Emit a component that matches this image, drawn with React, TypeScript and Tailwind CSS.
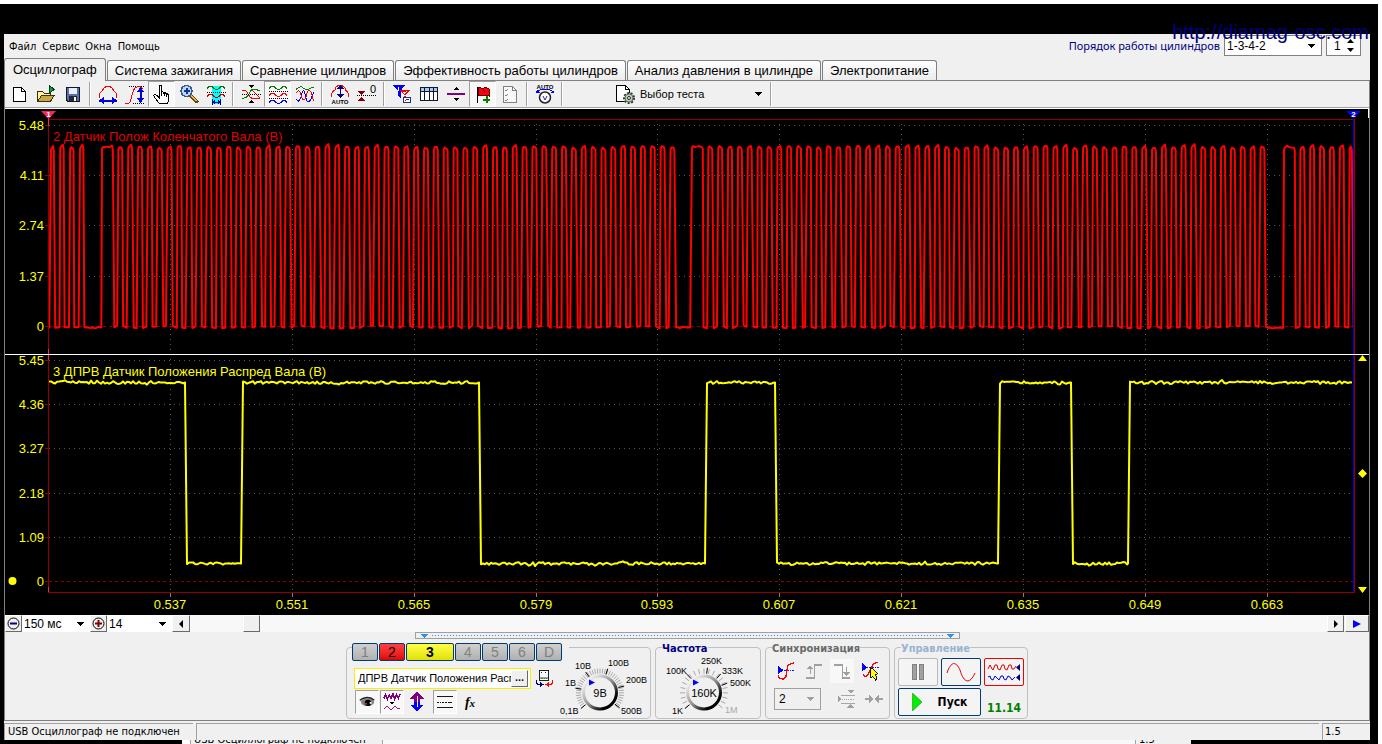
import React from "react";
import clsx from "clsx";

/* ---------- signal data ---------- */

const noise = (i: number) => {
  const v = Math.sin(i * 12.9898) * 43758.5453;
  return (v - Math.floor(v)) * 2 - 1;
};

const TOOTH = 9.86;
const RIGHT = 1353;

// crankshaft wheel 60-2: one wide pulse after each gap, then 57 normal ones
const crankPath = () => {
  const pts: string[] = ["49,327"];
  let n = 0;
  const pulse = (from: number, to: number) => {
    n += 1;
    const top = 147 + noise(n) * 1;
    const low = 327 + noise(n + 400) * 1.5;
    pts.push(`${from - 1.2 + noise(n + 50) * 0.7},${low}`);
    pts.push(`${from},${top + 2}`);
    pts.push(`${from + 1},${top}`);
    for (let x = from + 3; x < to - 1; x += 2) pts.push(`${x},${146.5 + noise(x) * 1}`);
    pts.push(`${to},${top - noise(n + 9) * 2}`);
    pts.push(`${to + 0.8},${top + 3}`);
    pts.push(`${to + 2.2 + noise(n + 70) * 0.7},${low}`);
  };
  for (let i = 0; i < 4; i++) pulse(51 + i * TOOTH - (i ? 0.6 : 0), 53.6 + i * TOOTH - 0.6);
  [102, 692, 1284].forEach((start) => {
    for (let x = start - 16; x < start - 2; x += 2) pts.push(`${x},${327.5 + noise(x) * 0.8}`);
    pulse(start, start + 10);
    for (let i = 0; i < 57; i++) {
      const x = start + 16.4 + i * TOOTH;
      if (x > RIGHT - 2) break;
      pulse(x, Math.min(x + 3, RIGHT - 2));
    }
  });
  return pts.join(" ");
};

const camEdges = [49, 186, 242, 480, 706, 776, 999, 1072, 1129, RIGHT];

const camPath = () => {
  const pts: string[] = [];
  for (let i = 0; i < camEdges.length - 1; i++) {
    const level = i % 2 === 0 ? 382.5 : 563.5;
    const to = camEdges[i + 1];
    for (let x = camEdges[i] + (i ? 1 : 0); x < to - 1; x += 2) {
      // now and then a taller spike
      const amp = noise(x + 31) > 0.85 ? 2.6 : 1.4;
      pts.push(`${x},${(level + noise(x) * amp).toFixed(1)}`);
    }
    pts.push(`${to - 1},${level}`);
  }
  return pts.join(" ");
};

const crank = crankPath();
const cam = camPath();

const crankScale = [["5.48", 125], ["4.11", 175], ["2.74", 225], ["1.37", 276], ["0", 326]] as const;
const camScale = [["5.45", 360], ["4.36", 404], ["3.27", 448], ["2.18", 493], ["1.09", 537], ["0", 581]] as const;
const timeScale = [
  ["0.537", 170], ["0.551", 292], ["0.565", 414], ["0.579", 536], ["0.593", 657],
  ["0.607", 779], ["0.621", 901], ["0.635", 1023], ["0.649", 1145], ["0.663", 1267],
] as const;

const Chart = () => (
  <svg viewBox="5 109 1364 506" className="block w-full bg-black font-['Liberation_Sans',sans-serif] text-[13px]" role="img" aria-label="Осциллограмма">
    <g stroke="#585858" strokeDasharray="1 4" shapeRendering="crispEdges">
      {timeScale.map(([t, x]) => (
        <React.Fragment key={t}>
          <path d={`M${x + 0.5} 124V352M${x + 0.5} 359V592`} />
          <path d={`M${x + 0.5} 593V597`} strokeDasharray="none" stroke="#808080" />
        </React.Fragment>
      ))}
      {[...crankScale, ...camScale].map(([t, y]) =>
        t === "0" ? (
          <path key={y} d={`M49 ${y + 0.5}H1354`} stroke="#900000" strokeDasharray="3 3" />
        ) : (
          <path key={y} d={`M49 ${y + 0.5}H1354`} />
        )
      )}
    </g>
    <g fill="none" strokeLinejoin="round" strokeWidth="2">
      <polyline points={crank} stroke="#ff0000" />
      <polyline points={cam} stroke="#ffff00" />
    </g>
    <g shapeRendering="crispEdges" fill="none">
      <path d="M48.5 119.5H1354.5V592.5H48.5Z" stroke="#900000" />
      <path d="M48.5 116V126M48.5 349V360M48.5 587V592" stroke="#ff2060" />
      <path d="M1353.5 116V592" stroke="#0000e0" />
      <path d="M1354.5 119V592" stroke="#900000" />
      <path d="M5 354.5H1369" stroke="#fff" />
      {[...crankScale, ...camScale].map(([, y]) => (
        <path key={y} d={`M45 ${y + 0.5}H48`} stroke="#900000" />
      ))}
      <path d="M1368.5 109V118" stroke="#fff" />
    </g>
    <path d="M41 111H56L48.5 119Z" fill="#ff2060" />
    <path d="M1346 111H1361L1353.5 118Z" fill="#0000ff" />
    <g fill="#fff" className="text-[8px] font-bold" textAnchor="middle">
      <text x="48.5" y="117">1</text>
      <text x="1353.5" y="117">2</text>
    </g>
    <g fill="#ffff00">
      <path d="M1358 361H1367L1362.5 355ZM1358 587H1367L1362.5 593ZM1358 473.5L1362.5 469L1367 473.5L1362.5 478Z" />
      <circle cx="12.5" cy="581" r="4" />
      {[...crankScale, ...camScale].map(([t, y]) => (
        <text key={y} x="44" y={y + 5} textAnchor="end">{t}</text>
      ))}
      {timeScale.map(([t, x]) => (
        <text key={t} x={x} y="609" textAnchor="middle">{t}</text>
      ))}
      <text x="53" y="376">3 ДПРВ Датчик Положения Распред Вала (В)</text>
    </g>
    <text x="53" y="141" fill="#e00000">2 Датчик Полож Коленчатого Вала (В)</text>
  </svg>
);

/* ---------- small pieces ---------- */

const Caret = ({ className }: { className?: string }) => (
  <svg viewBox="0 0 7 4" className={clsx("pointer-events-none h-1 w-[7px]", className)} shapeRendering="crispEdges">
    <path d="M0 0H7L3.5 4Z" fill="currentColor" />
  </svg>
);

const Icon = ({ children, size = "h-[22px] w-[22px]" }: { children: React.ReactNode; size?: string }) => (
  <svg viewBox="0 0 22 22" className={clsx("block shrink-0", size)} fill="none" shapeRendering="crispEdges">{children}</svg>
);

const pressedLook =
  "border border-t-[#a0a0a0] border-l-[#a0a0a0] border-b-white border-r-white bg-[#f8f8f8]";

const ToolButton = ({ label, pressed, children }: { label: string; pressed?: boolean; children: React.ReactNode }) => (
  <button
    type="button"
    aria-label={label}
    aria-pressed={pressed}
    className={clsx("flex h-[26px] w-[27px] items-center justify-center", pressed && pressedLook)}
  >
    <Icon>{children}</Icon>
  </button>
);

const Sep = () => (
  <div className="flex h-[26px] w-2 items-center justify-center">
    <div className="h-6 w-[2px] border-l border-[#a0a0a0] bg-white" />
  </div>
);

const waves = (y: number, color: string) => (
  <path d={`M2 ${y}l2-2h3l2 2 2 1h1l2-1 2-2h2l2 2`} stroke={color} />
);

const Toolbar = () => (
  <div className="flex items-center border-y border-t-[#808080] border-b-[#a0a0a0]">
    <ToolButton label="Новый">
      <path d="M5.500 4.500H13.500L17.500 8.500V18.500H5.500Z" fill="#fff" stroke="#000" />
      <path d="M13.500 4.500V8.500H17.500" stroke="#000" />
    </ToolButton>
    <ToolButton label="Открыть">
      <path d="M2.500 18.500V8.500H7.500L9.500 10.500H15.500V12" fill="#fff3a0" stroke="#3a3000" />
      <path d="M2.500 18.500L6.500 12.500H19L15.500 18.500Z" fill="#c8a848" stroke="#3a3000" />
      <path d="M14 2V11L19 6.500Z" fill="#00a838" stroke="#004020" />
    </ToolButton>
    <ToolButton label="Сохранить">
      <path d="M4.500 4.500H17.500V18.500H6L4.500 17Z" fill="#5a6fa8" stroke="#101828" />
      <path d="M7 5H15V11H7Z" fill="#e8f0ff" />
      <path d="M7 13H15V18H7Z" fill="#202838" />
      <path d="M12 14H14V18H12Z" fill="#fff" />
    </ToolButton>
    <Sep />
    <ToolButton label="Масштаб по времени">
      <path d="M2.500 15V11C3 9 5 8.500 6 6.500C7 4 9 3.500 11 3.500C13 3.500 15 4 16 6.500C17 8.500 19 9 19.500 11V15" stroke="#f00" />
      <path d="M2 17.500H20" stroke="#0000e0" strokeWidth="2" />
      <path d="M2 17.500L7 14V21ZM20 17.500L15 14V21Z" fill="#0000e0" />
    </ToolButton>
    <ToolButton label="Масштаб по амплитуде">
      <path d="M5 3.500H20M9 20.500H20" stroke="#000" strokeDasharray="1 1" />
      <path d="M1 20.500H4.500C8.500 19 7 6 12 4.500C14 3 17 3.500 19 5.500" stroke="#f00" />
      <path d="M16.500 6V18" stroke="#0000e0" strokeWidth="2" />
      <path d="M16.500 4L13 9H20ZM16.500 20L13 15H20Z" fill="#0000e0" />
    </ToolButton>
    <ToolButton label="Рука" pressed>
      <path
        d="M8.500 20.500C6 18 4 15 3 13C2.500 11.500 5 11 6.500 13L8 14.500V4C8 2 10.500 2 10.500 4V10C10.500 8.500 13 8.500 13 10.500C13 9.500 15.500 9.500 15.500 11.500C15.500 10.500 18 11 18 12.500C18.500 16 17.500 18 16.500 20.500Z"
        fill="#fff"
        stroke="#000"
      />
      <path d="M10.500 10V13M13 10.500V13M15.500 11.500V14" stroke="#000" />
    </ToolButton>
    <ToolButton label="Лупа">
      <path d="M12 12L19 18.500" stroke="#6a4510" strokeWidth="3.500" strokeLinecap="round" />
      <path d="M12 12L18.500 18" stroke="#f0b848" strokeWidth="1.500" />
      <circle cx="8.500" cy="8" r="5.500" fill="#b8d8f8" stroke="#405880" strokeWidth="1.500" />
      <path d="M8.500 5V11M5.500 8H11.500" stroke="#1030a0" strokeWidth="2" />
    </ToolButton>
    <ToolButton label="Выделение">
      <path d="M7 3H16V21H7Z" fill="#00ffff" />
      {waves(5.5, "#007000")}
      <path d="M2 9.500H21" stroke="#000" strokeDasharray="1 1" />
      {waves(13.5, "#c00000")}
      <path d="M7.500 16V22M15.500 16V22M8 19H15" stroke="#0000a0" />
      <path d="M7.500 19L10 17V21ZM15.500 19L13 17V21Z" fill="#0000a0" />
    </ToolButton>
    <Sep />
    <ToolButton label="Совместить">
      <path d="M2 8C6 5 7 10 10 14C13 17 16 15 20 15" stroke="#f00" />
      <path d="M2 15C6 16 8 14 10 9C12 5 16 6 20 8" stroke="#008000" />
      <path d="M12 7L20 15" stroke="#f00" />
      <path d="M2 11.500H21" stroke="#000" strokeDasharray="1 1" />
      <path d="M8.500 2H14.500L11.500 5ZM8.500 20H14.500L11.500 17Z" fill="#000" />
    </ToolButton>
    <ToolButton label="Раздельно" pressed>
      {waves(5.5, "#008000")}
      <path d="M2 8.500H21" stroke="#000" strokeDasharray="1 1" />
      {waves(12.5, "#f00")}
      <path d="M2 15.500H21" stroke="#000" strokeDasharray="1 1" />
      {waves(19.5, "#0000ff")}
    </ToolButton>
    <ToolButton label="Наложить">
      <path d="M2 6.500L4 5L7 3.500L10 5.500L13 7L17 5L20 4" stroke="#008000" />
      <path d="M2 16C4 19 5 19 7 14C8 9 9 7 10 8C12 12 12 18 14 19C17 19 18 12 20 9" stroke="#0000ff" />
      <path d="M2 10C4 7 6 7 7 12C8 17 10 19 12 14C13 8 15 6 17 9C19 12 18 16 20 18" stroke="#f00" />
    </ToolButton>
    <Sep />
    <ToolButton label="Авто усиление">
      <path d="M2.500 14V11L4 8.500L6 7V5L9 2.500H13L16 5V7L18 8.500L19.500 11V14" stroke="#f00" />
      <path d="M11.500 4V13" stroke="#000080" />
      <path d="M11.500 2L8 6H15ZM11.500 15L8 11H15Z" fill="#000080" />
      <text x="11" y="21" textAnchor="middle" fill="#000" className="font-['Liberation_Sans',sans-serif] text-[6px] font-bold">AUTO</text>
    </ToolButton>
    <ToolButton label="Обнулить">
      <path d="M1 12.500H20" stroke="#000" strokeDasharray="1 1" />
      <path d="M2 8H9L5.500 12ZM2 18H9L5.500 14Z" fill="#800000" />
      <text x="17" y="10" textAnchor="middle" fill="#000" className="font-['Liberation_Sans',sans-serif] text-[11px]">0</text>
    </ToolButton>
    <Sep />
    <ToolButton label="Фильтр">
      <path d="M2 2H14L9.500 8V15L7 13V8Z" fill="#0000ff" />
      <path d="M9 7H19L15 12V17L13 15V12Z" fill="#f00" />
      <path d="M7.500 4V8M12 9.500L15 9L12 12H15" stroke="#fff" />
      <path d="M12.500 14.500H19.500V19.500H12.500Z" fill="#fff" stroke="#203080" />
      <path d="M14 18L16 16L18 17" stroke="#203080" />
    </ToolButton>
    <ToolButton label="Таблица">
      <path d="M2.500 4.500H19.500V17.500H2.500Z" fill="#fff" stroke="#101830" />
      <path d="M3 5H19V8H3Z" fill="#a8c8f0" />
      <path d="M2.500 8.500H19.500M6.500 5V17M11.500 5V17M15.500 5V17" stroke="#101830" />
    </ToolButton>
    <ToolButton label="Разделить">
      <path d="M2 11H20" stroke="#800080" strokeWidth="2" />
      <path d="M8 7H14L11 4ZM8 15H14L11 18Z" fill="#000" />
    </ToolButton>
    <ToolButton label="Добавить метку" pressed>
      <path d="M5.500 4V20" stroke="#000" />
      <path d="M6 5C9 3 10 7 12 5C14 4 15 5 17 6V13C14 11 12 14 10 12L6 13Z" fill="#f00" stroke="#600" />
      <path d="M11 7L13 9" stroke="#0000c0" />
      <path d="M15 13V20M11 16.500H18" stroke="#008000" strokeWidth="2" />
    </ToolButton>
    <ToolButton label="Отчёт">
      <path d="M4.500 3.500H13.500L17.500 7.500V19.500H4.500Z" fill="#f8f8f8" stroke="#808080" />
      <path d="M13.500 3.500V7.500H17.500M6 7L7 8L9 6M6 12L7 13L9 11M6 17L7 18L9 16" stroke="#808080" />
    </ToolButton>
    <Sep />
    <ToolButton label="Авто измерение">
      <text x="11" y="6" textAnchor="middle" fill="#000" className="font-['Liberation_Sans',sans-serif] text-[6px] font-bold">AUTO</text>
      <path d="M3 10V8.500C8 5.500 14 5.500 19 8.500V10" stroke="#0000ff" />
      <path d="M2 10H6L3 7ZM20 10H16L19 7Z" fill="#0000ff" />
      <circle cx="11" cy="14.500" r="5.500" fill="#fff" stroke="#202020" strokeWidth="1.500" shapeRendering="auto" />
      <path d="M9 13L11 17L13 13" stroke="#2020c0" shapeRendering="auto" />
    </ToolButton>
    <Sep />
    <button type="button" className="ml-[44px] flex h-[26px] w-40 items-center gap-1 pl-1 font-['Liberation_Sans',sans-serif] text-[11px] text-black">
      <Icon>
        <path d="M2.500 2.500H11.500L15.500 6.500V18.500H2.500Z" fill="#fff" stroke="#000" />
        <path d="M11.500 2.500V6.500H15.500" stroke="#000" />
        <g shapeRendering="auto">
          <circle cx="15" cy="15" r="5" fill="#c0d0c0" stroke="#303830" strokeWidth="2" strokeDasharray="2 1.500" />
          <circle cx="15" cy="15" r="4" fill="#c0d0c0" stroke="#607060" />
          <circle cx="15" cy="15" r="1.500" fill="#fff" stroke="#202820" />
        </g>
      </Icon>
      <span className="flex-1 text-left whitespace-nowrap">Выбор теста</span>
      <Caret className="mr-2" />
    </button>
    <div className="h-6 w-[2px] border-l border-[#a0a0a0] bg-white" />
  </div>
);

const tabs = [
  "Осциллограф",
  "Система зажигания",
  "Сравнение цилиндров",
  "Эффективность работы цилиндров",
  "Анализ давления в цилиндре",
  "Электропитание",
];

const Tabs = () => (
  <div className="flex h-[22px] items-end gap-px font-['Liberation_Sans',sans-serif] text-[13px] leading-5" role="tablist">
    {tabs.map((tab, i) => (
      <button
        key={tab}
        type="button"
        role="tab"
        aria-selected={i === 0}
        className={clsx(
          "rounded-t-[3px] border border-b-0 border-[#808080] whitespace-nowrap",
          i === 0
            ? "relative -mb-px h-[23px] bg-[#f0f0f0] px-2"
            : "h-5 bg-linear-to-b from-white to-[#ececec] px-[7px]"
        )}
      >
        {tab}
      </button>
    ))}
  </div>
);

const Header = () => (
  <div className="flex h-6 items-start justify-between">
    <nav className="flex h-6 items-center gap-[6px] pt-[3px] pl-[5px] text-[11px]">
      {["Файл", "Сервис", "Окна", "Помощь"].map((m) => (
        <button key={m} type="button">{m}</button>
      ))}
    </nav>
    <div className="flex items-center gap-1 pt-px pr-[9px] font-['Liberation_Sans',sans-serif] text-[12px]">
      <label htmlFor="order" className="pt-[2px] whitespace-nowrap text-[#000080] text-[11px] font-['Noto_Sans',sans-serif]">
        Порядок работы цилиндров
      </label>
      <div className="relative flex h-[21px] w-[98px] items-center border border-[#808080] bg-white">
        <select id="order" className="w-full appearance-none bg-transparent pl-[2px] outline-none">
          <option>1-3-4-2</option>
        </select>
        <Caret className="absolute right-[6px]" />
      </div>
      <div className="relative flex h-[21px] w-[35px] items-center border border-[#808080] bg-white">
        <input aria-label="Номер цилиндра" defaultValue="1" className="w-full bg-transparent pl-[7px] outline-none" />
        <svg viewBox="0 0 7 13" className="absolute right-[6px] h-[13px] w-[7px]">
          <path d="M0 4H7L3.500 0ZM0 9H7L3.500 13Z" fill="#000" />
        </svg>
      </div>
    </div>
  </div>
);

const raised = "border border-t-white border-l-white border-b-[#696969] border-r-[#696969] bg-[#f0f0f0]";

const ScrollRow = () => (
  <div className="flex h-[17px] items-stretch bg-[#f0f0f0] font-['Liberation_Sans',sans-serif] text-[12px] leading-4">
    <button type="button" aria-label="Уменьшить" className={clsx("flex w-[17px] items-center justify-center", raised)}>
      <svg viewBox="0 0 13 13" className="h-[13px] w-[13px]" fill="none">
        <circle cx="6.500" cy="6.500" r="5.500" stroke="#000" />
        <path d="M3 6.500H10" stroke="#000080" strokeWidth="2" />
      </svg>
    </button>
    <div className="relative flex w-[68px] items-center bg-white">
      <select aria-label="Развёртка" className="w-full appearance-none bg-transparent pl-[2px] outline-none">
        <option>150 мс</option>
      </select>
      <Caret className="absolute right-[6px]" />
    </div>
    <button type="button" aria-label="Увеличить" className={clsx("flex w-[17px] items-center justify-center", raised)}>
      <svg viewBox="0 0 13 13" className="h-[13px] w-[13px]" fill="none">
        <circle cx="6.500" cy="6.500" r="5.500" stroke="#000" />
        <path d="M3 6.500H10M6.500 3V10" stroke="#800000" strokeWidth="2" />
      </svg>
    </button>
    <div className="relative flex w-[65px] items-center bg-white">
      <select aria-label="Масштаб" className="w-full appearance-none bg-transparent pl-[2px] outline-none">
        <option>14</option>
      </select>
      <Caret className="absolute right-[6px]" />
    </div>
    <div className="flex flex-1 bg-[#f8f8f8]">
      <button type="button" aria-label="Влево" className={clsx("flex w-[18px] items-center justify-center", raised)}>
        <svg viewBox="0 0 4 8" className="h-2 w-1"><path d="M4 0V8L0 4Z" /></svg>
      </button>
      <div className={clsx("ml-[53px] w-[17px]", raised)} />
      <button type="button" aria-label="Вправо" className={clsx("ml-auto flex w-[17px] items-center justify-center", raised)}>
        <svg viewBox="0 0 4 8" className="h-2 w-1"><path d="M0 0V8L4 4Z" /></svg>
      </button>
    </div>
    <button type="button" aria-label="В конец" className={clsx("ml-px flex w-6 items-center justify-center", raised)}>
      <svg viewBox="0 0 8 8" className="h-2 w-2"><path d="M0 0V8L8 4Z" fill="#0000ff" /></svg>
    </button>
  </div>
);

/* ---------- knobs ---------- */

type KnobLabel = { text: string; x: number; y: number; off?: boolean };

const Knob = ({ viewBox, className, cx, value, marks, minor, labels }: {
  viewBox: string;
  className: string;
  cx: number;
  value: string;
  marks: number[];
  minor: number;
  labels: KnobLabel[];
}) => {
  const cy = 692.5;
  const tick = (deg: number, r1: number, r2: number) => {
    const a = (deg * Math.PI) / 180;
    return `M${cx + r1 * Math.sin(a)} ${cy - r1 * Math.cos(a)}L${cx + r2 * Math.sin(a)} ${cy - r2 * Math.cos(a)}`;
  };
  const grey: number[] = [];
  for (let d = -130; d <= 130; d += minor) grey.push(d);
  return (
    <svg viewBox={viewBox} className={clsx("block shrink-0 font-['Liberation_Sans',sans-serif]", className)} role="img" aria-label={value}>
      <defs>
        <linearGradient id={`ring${cx}`} x1="0" y1="0" x2="1" y2="1">
          <stop offset="0.1" stopColor="#f8f8f8" />
          <stop offset="0.5" stopColor="#909090" />
          <stop offset="0.8" stopColor="#000" />
        </linearGradient>
      </defs>
      <path d={grey.map((d) => tick(d, 19, 24)).join("")} stroke="#a8a8a8" />
      <path d={marks.map((d) => tick(d, 19, 25)).join("")} stroke="#000" />
      <circle cx={cx} cy={cy} r="16.500" fill="#f0f0f0" stroke={`url(#ring${cx})`} strokeWidth="3" />
      <path d={`M${cx - 11} ${cy - 13}V${cy - 7}L${cx - 5} ${cy - 10}Z`} fill="#0000ff" />
      <text x={cx} y={cy + 4} textAnchor="middle" className="text-[11px]">{value}</text>
      {labels.map((l) => (
        <text key={l.text} x={l.x} y={l.y} fill={l.off ? "#a8a8a8" : "#000"} className="text-[9px]">{l.text}</text>
      ))}
    </svg>
  );
};

/* ---------- bottom panel ---------- */

const channels = [
  { name: "1", look: "w-[26px] bg-linear-to-b from-[#d0d0d0] to-[#b0b0b0] text-[#808080]" },
  { name: "2", look: "w-[26px] bg-linear-to-b from-[#ff4040] to-[#e00000] text-black" },
  { name: "3", look: "w-12 bg-linear-to-b from-[#ffff40] to-[#e0e000] text-black font-bold" },
  { name: "4", look: "w-[26px] bg-linear-to-b from-[#d0d0d0] to-[#b0b0b0] text-[#808080]" },
  { name: "5", look: "w-[26px] bg-linear-to-b from-[#d0d0d0] to-[#b0b0b0] text-[#808080]" },
  { name: "6", look: "w-[26px] bg-linear-to-b from-[#d0d0d0] to-[#b0b0b0] text-[#808080]" },
  { name: "D", look: "w-[26px] bg-linear-to-b from-[#d0d0d0] to-[#b0b0b0] text-[#808080]" },
];

const PanelButton = ({ label, pressed, children }: { label: string; pressed?: boolean; children: React.ReactNode }) => (
  <button
    type="button"
    aria-label={label}
    aria-pressed={pressed}
    className={clsx("flex h-6 w-6 items-center justify-center", pressed && pressedLook)}
  >
    <Icon size="h-5 w-5">{children}</Icon>
  </button>
);

const ChannelGroup = () => (
  <div className="flex h-[72px] w-[305px] rounded border border-[#c0c0c0]">
    <div className="-mt-[5px] flex w-[211px] flex-col pl-[5px]">
      <div className="flex w-[217px] shrink-0 gap-px bg-[#f0f0f0] font-['Liberation_Sans',sans-serif] text-[14px]">
        {channels.map((c) => (
          <button key={c.name} type="button" className={clsx("h-[18px] shrink-0 rounded-[2px] border border-[#003c74] leading-4", c.look)}>
            {c.name}
          </button>
        ))}
      </div>
      <div className="mt-[7px] ml-[2px] flex items-center gap-1">
        <div className="flex h-[21px] w-[177px] shrink-0 items-center border border-[#f8f000] bg-white pr-[2px]">
          <input
            aria-label="Название канала"
            defaultValue="ДПРВ Датчик Положения Распред Вала"
            className="min-w-0 flex-1 bg-transparent pl-[3px] font-['Liberation_Sans',sans-serif] text-[11px] outline-none"
          />
          <button type="button" className={clsx("h-[17px] w-[17px] text-[9px] leading-[9px] font-bold", raised)}>...</button>
        </div>
        <Icon size="h-[19px] w-[19px]">
          <path d="M5 1.500H16V13H5Z" fill="#fff" stroke="#000" />
          <path d="M6 9H15V12H6Z" fill="#a0a0a0" />
          <path d="M7 5L9 3M11 5L13 3" stroke="#000" />
          <path d="M7 10.500H14" stroke="#00a000" strokeDasharray="2 1" />
          <path d="M2 13C0 16 3 19 7 18" stroke="#000080" strokeWidth="1.500" />
          <path d="M6 15L10 18L6 21Z" fill="#000080" />
          <path d="M20 13C22 16 19 19 16 18" stroke="#f00" strokeWidth="1.500" />
          <path d="M16 15L12 18L16 21Z" fill="#f00" />
        </Icon>
      </div>
      <div className="mt-px ml-[3px] flex items-center gap-px">
        <PanelButton label="Показать" pressed>
          <g shapeRendering="auto">
            <path d="M4 10C8 6 16 6 19 11C18 16 8 17 5 13Z" fill="#808080" />
            <path d="M3 9C8 5 15 5 19 9" stroke="#202020" strokeWidth="1.500" />
            <circle cx="12" cy="12" r="3.500" fill="#000" />
            <path d="M9 12H11V14H9Z" fill="#c03030" />
            <path d="M14 11H16V13H14Z" fill="#fff" />
          </g>
        </PanelButton>
        <PanelButton label="Сглаживание" pressed>
          <path d="M2 7L4 3L6 8L8 3L10 7L12 2L14 8L16 3L18 7L20 2" stroke="#800080" strokeWidth="1.500" />
          <path d="M8 11H14L11 14Z" fill="#000" />
          <path d="M2 19C5 14 7 16 9 19C11 20 13 15 15 16C17 17 18 20 20 18" stroke="#800080" />
        </PanelButton>
        <PanelButton label="Инверсия">
          <path d="M11 0L19 8H14V11H8V8H3Z" fill="#800080" />
          <path d="M11 22L19 14H14V11H8V14H3Z" fill="#0000ff" />
          <path d="M11 4V17" stroke="#fff" />
        </PanelButton>
        <div className="w-[2px]" />
        <PanelButton label="Уровни" pressed>
          <path d="M2 4.500H20M2 17.500H20" stroke="#000" />
          <path d="M2 11H20" stroke="#000" strokeDasharray="2 1" />
        </PanelButton>
        <button type="button" className="h-6 w-6 font-['Liberation_Serif',serif] text-[14px] font-bold italic">
          f<span className="text-[11px]">x</span>
        </button>
      </div>
    </div>
    <Knob
      viewBox="558 648 90 70"
      className="h-[70px] w-[90px]"
      cx={600}
      value="9В"
      marks={[-130, -80, -35, 18, 75, 128]}
      minor={6.5}
      labels={[
        { text: "0,1В", x: 560, y: 714 },
        { text: "1В", x: 565, y: 686 },
        { text: "10В", x: 575, y: 669 },
        { text: "100В", x: 608, y: 666 },
        { text: "200В", x: 626, y: 683 },
        { text: "500В", x: 621, y: 714 },
      ]}
    />
  </div>
);

const Group = ({ title, className, titleColor, children }: { title: string; className: string; titleColor: string; children: React.ReactNode }) => (
  <fieldset className={clsx("h-[81px] min-w-0 rounded border border-[#c0c0c0]", className)}>
    <legend className={clsx("ml-[6px] pt-1 text-[11px] leading-[14px] font-bold", titleColor)}>{title}</legend>
    {children}
  </fieldset>
);

const SyncGroup = () => (
  <Group title="Синхронизация" className="w-[125px]" titleColor="text-[#696969]">
    <div className="flex flex-col gap-1 pt-[3px] pl-2">
      <div className="flex gap-1">
        <PanelButton label="Уровень">
          <path d="M2 5V15L8 10Z" fill="#0000ff" />
          <path d="M6 10.500H20" stroke="#0000ff" strokeDasharray="2 1" />
          <path d="M2 16L4 19L8 20L11 17L13 5L16 3L20 2" stroke="#f00" strokeWidth="1.500" />
        </PanelButton>
        <PanelButton label="По фронту">
          <path d="M2 18.500H11.500V4.500H20" stroke="#a0a0a0" strokeWidth="1.500" />
          <path d="M7 14V6" stroke="#a0a0a0" strokeWidth="1.500" />
          <path d="M3 9H11L7 5Z" fill="#a0a0a0" />
        </PanelButton>
        <button type="button" aria-label="По спаду" className="flex h-6 w-6 items-center justify-center bg-[#f8f8f8]">
          <Icon size="h-5 w-5">
            <path d="M2 4.500H11.500V18.500H20" stroke="#a0a0a0" strokeWidth="1.500" />
            <path d="M16 7V14" stroke="#a0a0a0" strokeWidth="1.500" />
            <path d="M12 12H20L16 17Z" fill="#a0a0a0" />
          </Icon>
        </button>
        <PanelButton label="Выбрать уровень">
          <path d="M2 2V12L8 7Z" fill="#0000ff" />
          <path d="M7 7.500H21" stroke="#0000ff" strokeDasharray="2 1" />
          <path d="M3 15L6 17L9 15L14 4L19 1" stroke="#f00" strokeWidth="1.500" />
          <path d="M11 7L13 8L19 14L17 15L19 20L17 21L14 17L12 19Z" fill="#ffff00" stroke="#000" />
        </PanelButton>
      </div>
      <div className="flex items-center gap-1">
        <div className="relative mr-[9px] flex h-[22px] w-[47px] items-center border border-[#a0a0a0]">
          <select aria-label="Канал синхронизации" className="w-full appearance-none bg-transparent pl-1 font-['Liberation_Sans',sans-serif] text-[12px] outline-none">
            <option>2</option>
          </select>
          <Caret className="absolute right-[6px] text-[#a0a0a0]" />
        </div>
        <PanelButton label="Диапазон">
          <path d="M2 7V15L6 11ZM12 1H20L16 5ZM12 21H20L16 17Z" fill="#a0a0a0" />
          <path d="M5 7.500H21M5 15.500H21" stroke="#a0a0a0" />
          <path d="M7 11.500H20" stroke="#a0a0a0" strokeDasharray="1 1" />
        </PanelButton>
        <PanelButton label="Сжать">
          <path d="M1 11H6M16 11H21" stroke="#a0a0a0" strokeWidth="3" />
          <path d="M5 6V16L10 11ZM17 6V16L12 11Z" fill="#a0a0a0" />
        </PanelButton>
      </div>
    </div>
  </Group>
);

const controlLook = "flex h-7 items-center justify-center rounded-[2px] border bg-[#f4f4f4]";

const ControlGroup = () => (
  <Group title="Управление" className="w-[134px]" titleColor="text-[#99b4d1]">
    <div className="grid grid-cols-[40px_40px_40px] gap-x-[3px] gap-y-[2px] pt-[2px] pl-[3px]">
      <button type="button" aria-label="Пауза" className={clsx(controlLook, "border-[#b8b8b8]")}>
        <Icon size="h-[22px] w-[22px]">
          <path d="M5.500 3.500H9.500V18.500H5.500ZM12.500 3.500H16.500V18.500H12.500Z" fill="#a0a0a0" stroke="#808080" />
        </Icon>
      </button>
      <button type="button" aria-label="Непрерывно" className={clsx(controlLook, "border-[#003c74]")}>
        <svg viewBox="0 0 30 20" className="h-5 w-[30px]" fill="none">
          <path d="M1 11C5 -1 10 -1 14 8C18 22 24 22 29 11" stroke="#e00000" />
        </svg>
      </button>
      <button type="button" aria-label="Запись" className={clsx(controlLook, "border-[#f00000]")}>
        <svg viewBox="0 0 34 22" className="h-[22px] w-[34px]" fill="none">
          <path d="M1 8L3 4L5 8L6 9L8 4H10L11 8L13 9L15 4H17L18 8L20 9L22 4H24L25 8L27 8L29 5" stroke="#e00000" />
          <path d="M1 16L3 15L4 18L6 19L8 15L10 17L12 19L14 15L16 15L17 18L19 19L21 15L23 16L25 19L28 16" stroke="#0000e0" />
          <path d="M33 3V10L29 6.500ZM33 13V20L29 16.500Z" fill="#000080" />
        </svg>
      </button>
      <button type="button" className={clsx(controlLook, "col-span-2 gap-4 border-[#003c74] text-[12px] font-bold")}>
        <svg viewBox="0 0 10 18" className="h-[18px] w-[10px]"><path d="M0.500 0V18L10 9Z" fill="#00f000" stroke="#008000" strokeWidth="0.500" /></svg>
        Пуск
      </button>
      <div className="self-end text-center text-[12px] leading-[15px] font-bold text-[#008000]">11.14</div>
    </div>
  </Group>
);

const Splitter = () => (
  <div className="mx-auto flex h-[7px] w-[545px] items-center gap-1 border border-[#a0a0a0] px-[5px] text-[#3090f0]">
    <Caret />
    <div className="h-px flex-1 bg-[repeating-linear-gradient(90deg,#3090f0_0_1px,transparent_1px_3px)]" />
    <Caret />
  </div>
);

const ControlPanel = () => (
  <div className="h-[88px]">
    <Splitter />
    <div className="-mt-px flex items-end justify-center gap-1">
      <ChannelGroup />
      <Group title="Частота" className="w-[106px]" titleColor="text-[#000080]">
        <Knob
          viewBox="656 656 102 62"
          className="h-[62px] w-[102px]"
          cx={704}
          value="160K"
          marks={[-130, -43, 8, 42, 68]}
          minor={13}
          labels={[
            { text: "1K", x: 672, y: 714 },
            { text: "100K", x: 666, y: 674 },
            { text: "250K", x: 701, y: 664 },
            { text: "333K", x: 722, y: 674 },
            { text: "500K", x: 730, y: 686 },
            { text: "1M", x: 725, y: 713, off: true },
          ]}
        />
      </Group>
      <SyncGroup />
      <ControlGroup />
    </div>
  </div>
);

const sunken = "border-t border-l border-[#a0a0a0]";

const StatusBar = () => (
  <div className="flex h-5 gap-[3px] border-t border-[#808080] pt-[2px] text-[11px] leading-[15px]">
    <div className={clsx("w-[189px] pl-[3px] whitespace-nowrap", sunken)}>USB Осциллограф не подключен</div>
    <div className={clsx("flex-1", sunken)} />
    <div className={clsx("w-12 pl-[2px]", sunken)}>1.5</div>
  </div>
);

const App = () => (
  <div className="min-h-screen bg-white pt-1 pr-1 font-['DejaVu_Sans_Condensed','DejaVu_Sans',sans-serif] text-black">
    <div className="relative bg-black pt-[30px]">
      <a href="http://diamag-osc.com" className="absolute top-4 right-[9px] font-['Liberation_Sans',sans-serif] text-[20px] leading-6 text-[#000080] z-10">
        http://diamag-osc.com
      </a>
      <main className="mr-2 ml-1 bg-[#f0f0f0]">
        <Header />
        <Tabs />
        <div className="border-x border-[#808080]">
          <Toolbar />
          <div className="border-t border-white">
            <Chart />
          </div>
          <ScrollRow />
          <ControlPanel />
        </div>
        <StatusBar />
      </main>
      {/* edge of the window lying behind */}
      <div className="flex h-1 overflow-hidden pr-[187px] pl-[182px] text-[11px] leading-2">
        <div className="w-2 bg-white" />
        <div className="flex w-48 items-end border-l border-[#a0a0a0] bg-[#f0f0f0] pl-[3px] whitespace-nowrap">USB Осциллограф не подключен</div>
        <div className="flex-1 border-l border-[#a0a0a0] bg-[#f8f8f8]" />
        <div className="flex w-14 items-end border-l border-[#a0a0a0] bg-[#f0f0f0] pl-[3px]">1.5</div>
      </div>
    </div>
  </div>
);

export default App;
